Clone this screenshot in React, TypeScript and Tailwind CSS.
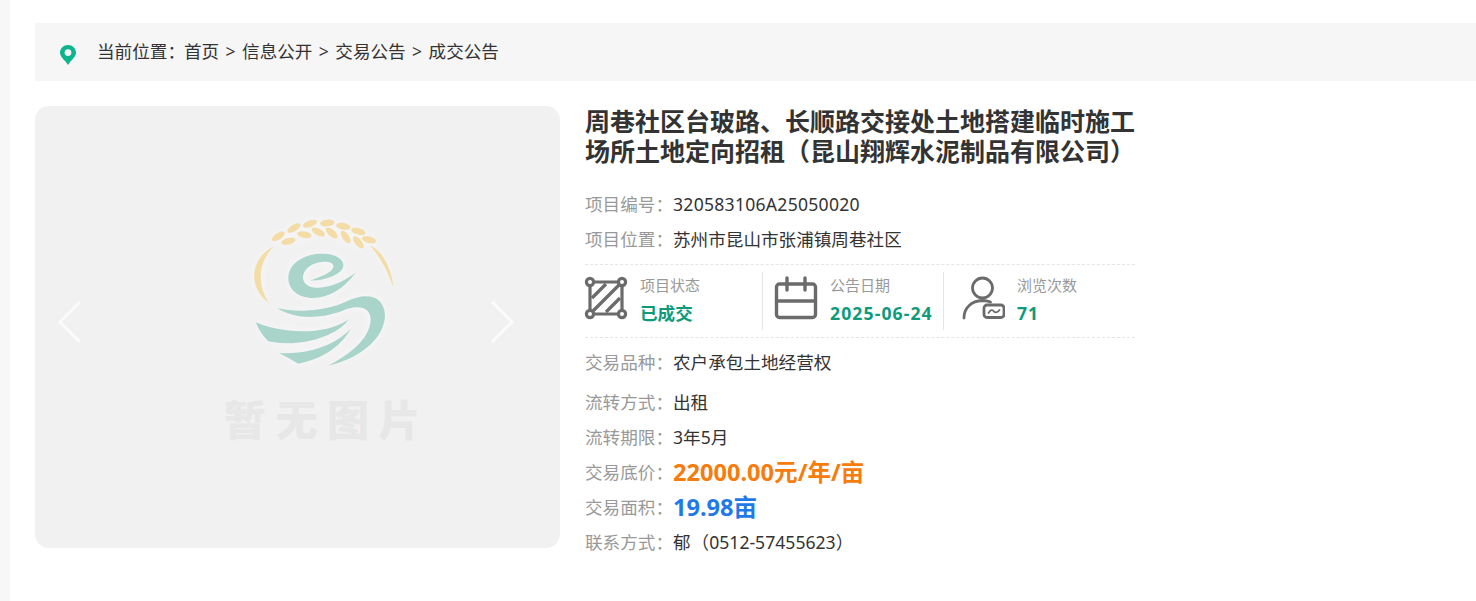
import type { ReactNode } from "react";

const FONT = "font-['Noto_Sans','Noto_Sans_CJK_SC',sans-serif]";

const grains = [
  [235, 110, -32],
  [282, 85, -32],
  [330, 72, -20],
  [382, 70, -6],
  [430, 80, 10],
  [475, 95, 16],
  [507, 120, 14],
  [265, 125, -14],
  [313, 105, 10],
  [355, 97, 28],
  [395, 100, 42],
  [437, 112, 55],
  [475, 128, 50],
];

function Logo() {
  return (
    <svg className="drop-shadow-[0_0_5px_#f9f9f9]" width="150" height="150" viewBox="150 55 450 450" aria-hidden="true">
      <g fill="#f3dca6">
        {grains.map(([x, y, r]) => (
          <ellipse key={`${x}-${y}`} cx={x} cy={y} rx="22" ry="10" transform={`rotate(${r} ${x} ${y})`} />
        ))}
        <path d="M220 141C165 165 130 250 207 310C172 260 172 190 220 141Z" />
        <path d="M510 138C550 150 578 220 580 262C562 212 542 172 510 138Z" />
      </g>
      <g fill="#a9d4ca">
        <path d="M468 218C430 270 385 295 340 295C295 295 265 270 265 235C265 190 315 160 370 162C410 163 432 180 430 198C428 222 380 242 330 243C360 232 395 220 400 202C403 190 385 185 365 187C330 190 305 215 310 240C315 262 345 268 375 262C410 255 440 240 468 218Z" />
        <path d="M232 325C290 340 380 335 440 305C490 280 550 280 555 345C555 420 470 480 385 497C440 470 510 420 512 360C512 325 480 315 440 328C380 355 290 365 232 325Z" />
        <path d="M168 368C240 400 370 410 445 360C410 410 300 445 205 425C190 410 175 390 168 368Z" />
        <path d="M238 460C320 465 400 440 452 388C420 445 360 480 295 492C275 480 255 470 238 460Z" />
      </g>
    </svg>
  );
}

function PinIcon() {
  return (
    <svg className="mt-[6px] shrink-0" width="16" height="20" viewBox="0 0 16 20" aria-hidden="true">
      <path
        fillRule="evenodd"
        d="M8 0C3.6 0 0 3.4 0 7.6C0 12.4 5.2 15.2 8 20C10.8 15.2 16 12.4 16 7.6C16 3.4 12.4 0 8 0ZM8 4.2A3.4 3.4 0 1 1 8 11A3.4 3.4 0 0 1 8 4.2Z"
        fill="#0db58f"
      />
    </svg>
  );
}

function AreaIcon() {
  return (
    <svg width="44" height="44" viewBox="0 0 44 44" fill="none" stroke="#6b6b6b" strokeWidth="3.2" aria-hidden="true">
      <path d="M9 6H35M38 9V35M35 38H9M6 35V9" />
      <path d="M9 35L35 9M8 22L22 8M22 36L36 22" />
      <circle cx="6" cy="6" r="3.6" fill="#fff" />
      <circle cx="38" cy="6" r="3.6" fill="#fff" />
      <circle cx="6" cy="38" r="3.6" fill="#fff" />
      <circle cx="38" cy="38" r="3.6" fill="#fff" />
    </svg>
  );
}

function CalendarIcon() {
  return (
    <svg width="44" height="44" viewBox="0 0 44 44" fill="none" stroke="#6b6b6b" strokeWidth="3.4" strokeLinecap="round" aria-hidden="true">
      <rect x="2.5" y="8" width="39" height="33.5" rx="3" />
      <path d="M2.5 25H41.5M13 2V14M31 2V14" />
    </svg>
  );
}

function ViewerIcon() {
  return (
    <svg width="44" height="44" viewBox="0 0 44 44" fill="none" stroke="#6b6b6b" strokeWidth="2.8" strokeLinecap="round" aria-hidden="true">
      <circle cx="21.5" cy="12" r="10" />
      <path d="M3 42C3 32 10 25 21.5 24.5C24.5 24.5 27 25 29.5 26" />
      <rect x="23" y="29" width="20" height="12.5" rx="3" />
      <path d="M27.5 37C29.5 33.5 31.5 33.5 33 35.5C34.5 37 36.5 36.5 38.5 34" strokeWidth="1.8" />
    </svg>
  );
}

function Stat({
  icon,
  label,
  value,
  className,
  valueClass = "",
}: {
  icon: ReactNode;
  label: string;
  value: string;
  className: string;
  valueClass?: string;
}) {
  return (
    <div className={`flex h-[58px] items-center ${className}`}>
      <div className="-mt-[6px] -ml-[1px] shrink-0">{icon}</div>
      <div className="-mt-[3px] ml-[12px] flex flex-col whitespace-nowrap">
        <span className="text-[15px] leading-[20px] text-[#999999]">{label}</span>
        <span className={`mt-[6px] text-[17.6px] leading-[24px] font-bold text-[#0f9b7a] ${valueClass}`}>{value}</span>
      </div>
    </div>
  );
}

function Row({ label, className = "", children }: { label: string; className?: string; children: ReactNode }) {
  return (
    <div className={`flex h-[35px] items-center text-[17.6px] whitespace-nowrap ${className}`}>
      <span className="w-[88px] shrink-0 text-[#999999]">{label}：</span>
      <span className="text-[#333333]">{children}</span>
    </div>
  );
}

export default function App() {
  return (
    <div className={`flex h-[601px] overflow-hidden bg-white ${FONT}`}>
      <div className="w-[10px] shrink-0 bg-[#f7f7f7]" />
      <div className="min-w-0 flex-1 pt-[23px] pl-[25px]">
        <div className="flex h-[58px] items-center bg-[#f6f6f6] pl-[25px] text-[17.6px] whitespace-nowrap text-[#333333]">
          <PinIcon />
          <div className="-mt-[2px] ml-[21px] flex items-center gap-[6.4px]">
            <span className="w-[80.6px]">当前位置：</span>
            <span>首页</span>
            <span>&gt;</span>
            <span>信息公开</span>
            <span>&gt;</span>
            <span>交易公告</span>
            <span>&gt;</span>
            <span>成交公告</span>
          </div>
        </div>

        <div className="mt-[25px] flex gap-[25px]">
          <div className="relative flex h-[442px] w-[525px] shrink-0 flex-col items-center rounded-[14px] bg-[#f1f1f1] pt-[112px] pl-[55px]">
            <Logo />
            <span className="mt-[27px] ml-[4px] text-[42px] leading-[50px] font-black tracking-[9.6px] whitespace-nowrap text-[#e7e7e7]">
              暂无图片
            </span>
            <svg className="absolute top-[194px] left-[22px]" width="26" height="44" viewBox="0 0 26 44" fill="none" stroke="#fbfbfb" strokeWidth="3" aria-hidden="true">
              <path d="M23 2L3 22L23 42" />
            </svg>
            <svg className="absolute top-[194px] left-[454px]" width="26" height="44" viewBox="0 0 26 44" fill="none" stroke="#fbfbfb" strokeWidth="3" aria-hidden="true">
              <path d="M3 2L23 22L3 42" />
            </svg>
          </div>

          <div className="w-[550px] shrink-0">
            <h1 className="text-[25px] leading-[30px] font-bold text-[#333333]">
              周巷社区台玻路、长顺路交接处土地搭建临时施工场所土地定向招租（昆山翔辉水泥制品有限公司）
            </h1>
            <div className="mt-[21px]">
              <Row label="项目编号">
                <span className="tracking-[0.25px]">320583106A25050020</span>
              </Row>
              <Row label="项目位置">苏州市昆山市张浦镇周巷社区</Row>
            </div>
            <div className="mt-[7px] flex h-[74px] items-center border-y border-dashed border-[#e5e5e5]">
              <Stat icon={<AreaIcon />} label="项目状态" value="已成交" className="w-[178px] border-r border-[#e5e5e5]" />
              <Stat
                icon={<CalendarIcon />}
                label="公告日期"
                value="2025-06-24"
                valueClass="tracking-[1.1px]"
                className="w-[181px] border-r border-[#e5e5e5] pl-[12px]"
              />
              <Stat icon={<ViewerIcon />} label="浏览次数" value="71" valueClass="tracking-[1px]" className="pl-[18px]" />
            </div>
            <div className="mt-[7px]">
              <Row label="交易品种">农户承包土地经营权</Row>
              <Row label="流转方式" className="mt-[5px]">
                出租
              </Row>
              <Row label="流转期限">3年5月</Row>
              <Row label="交易底价">
                <span className="text-[23.6px] font-bold text-[#f57c0d]">22000.00元/年/亩</span>
              </Row>
              <Row label="交易面积">
                <span className="text-[23.6px] font-bold text-[#1f7ae8]">19.98亩</span>
              </Row>
              <Row label="联系方式">
                <span className="mr-[1px]">郁</span>（0512-57455623）
              </Row>
            </div>
          </div>
        </div>
      </div>
    </div>
  );
}
